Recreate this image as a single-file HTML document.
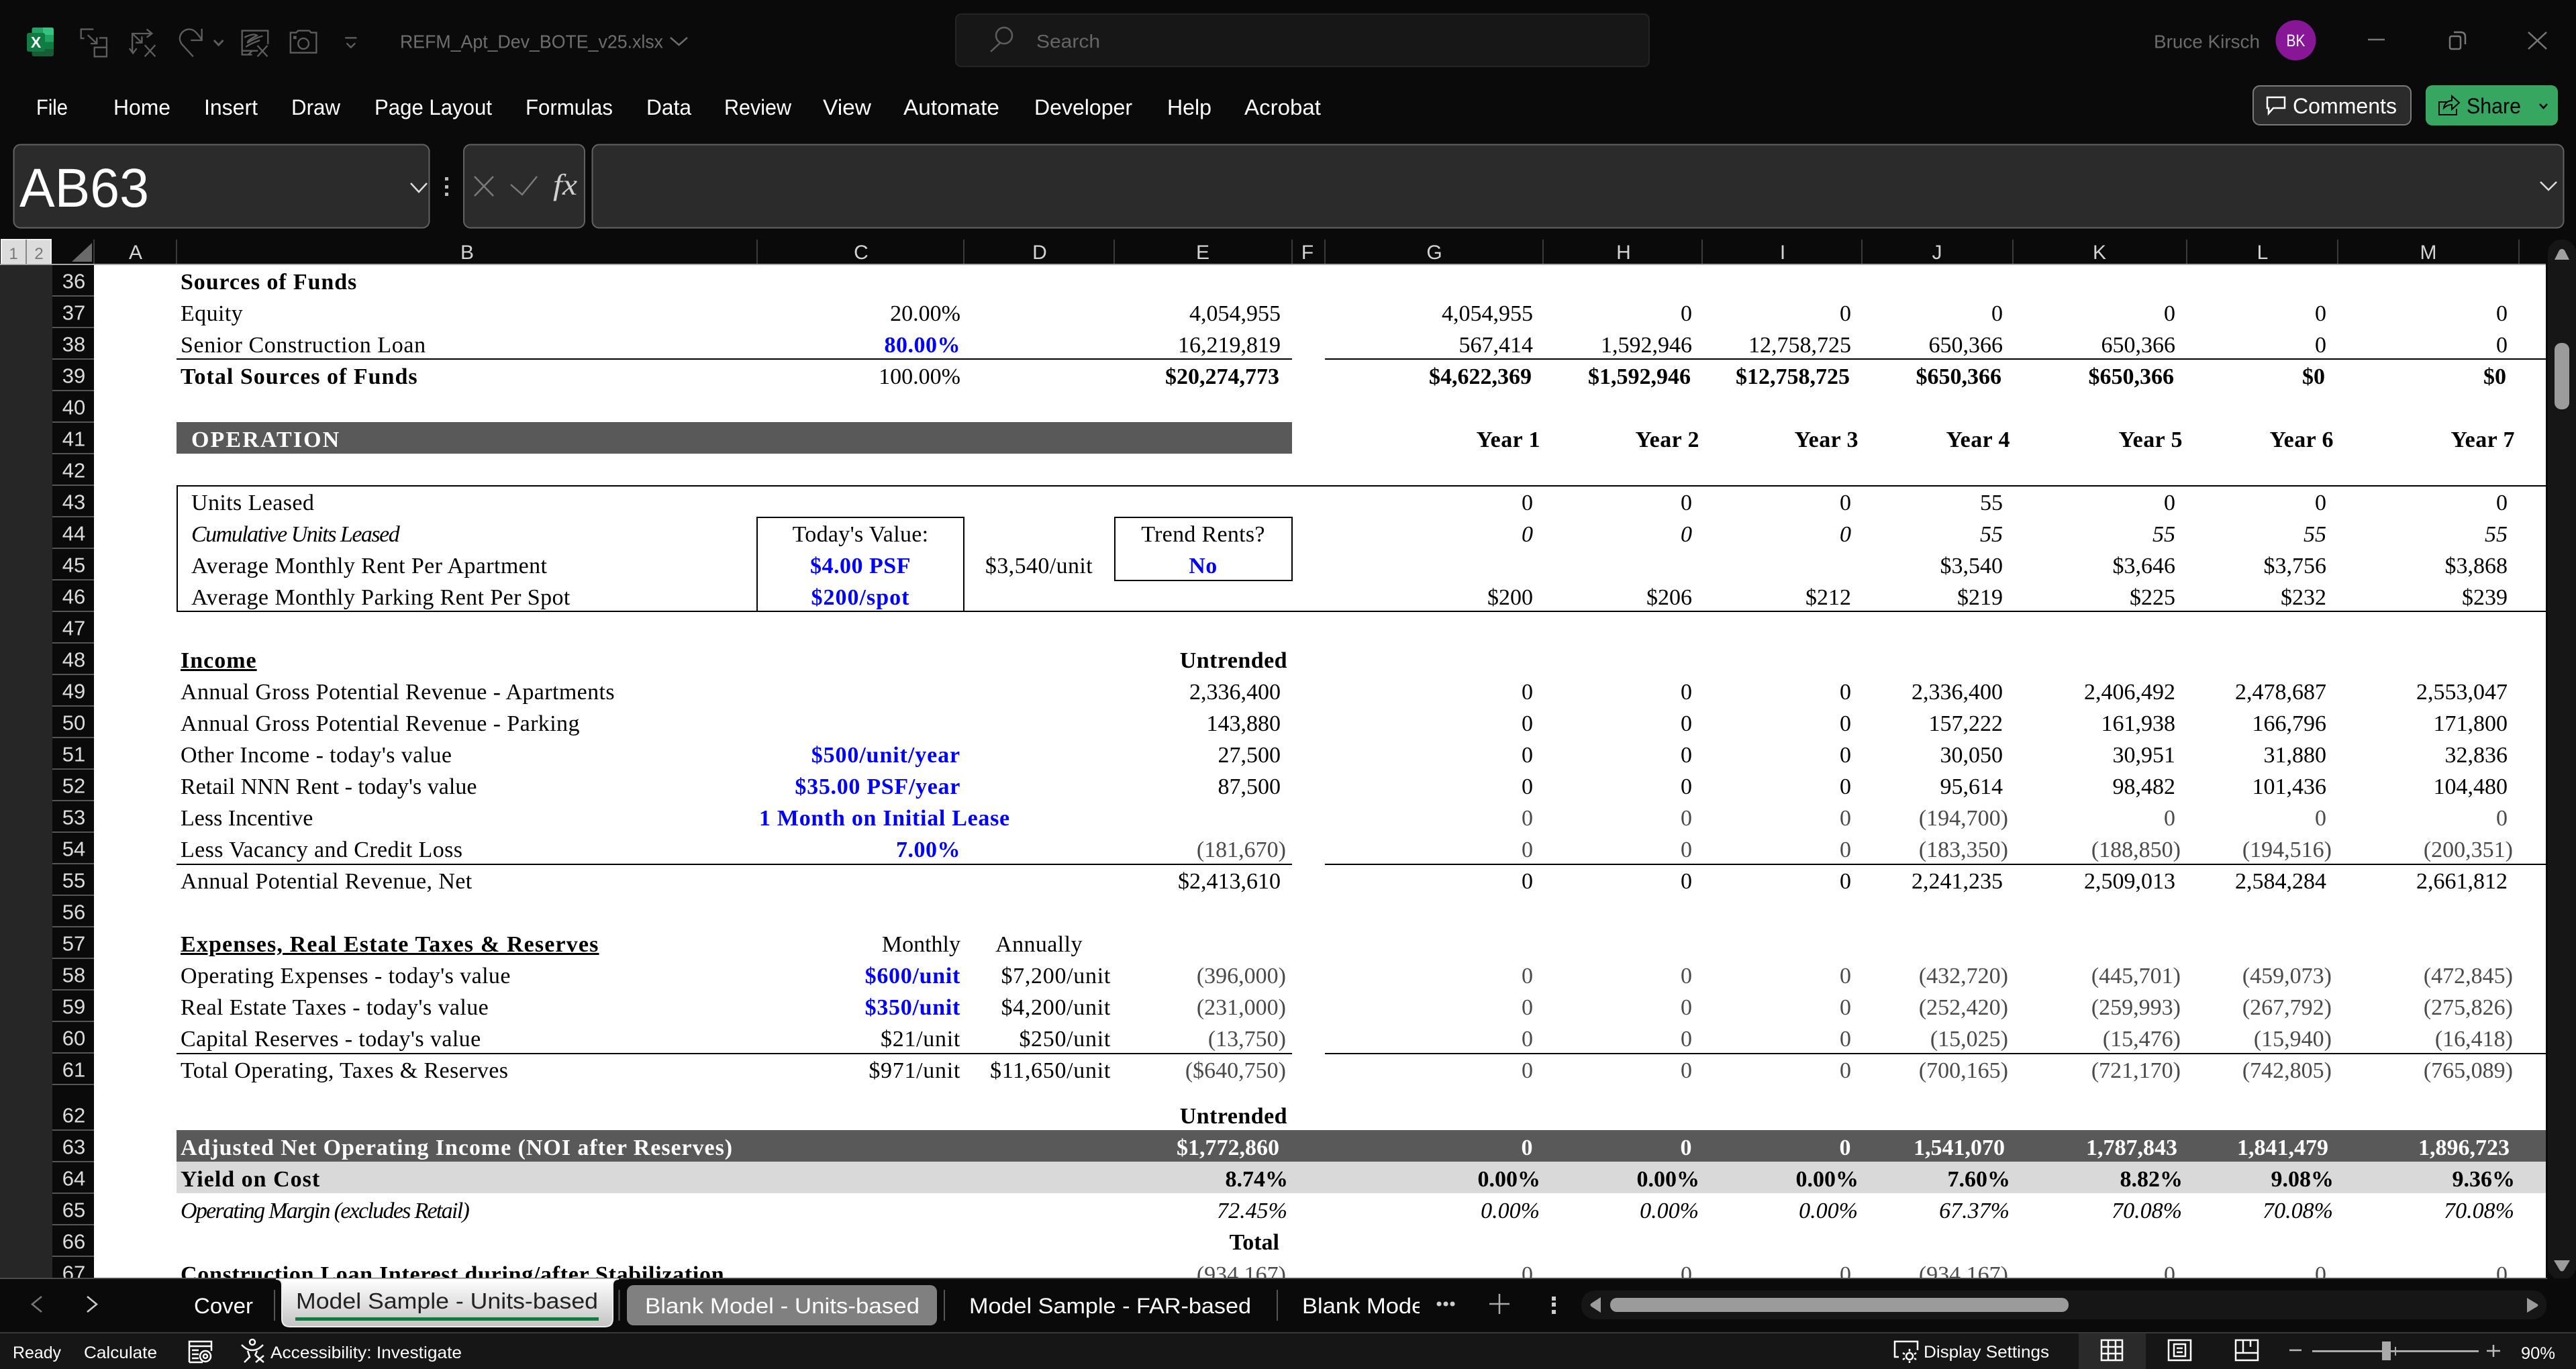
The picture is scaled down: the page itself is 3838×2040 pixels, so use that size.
<!DOCTYPE html>
<html lang="en"><head><meta charset="utf-8"><title>REFM_Apt_Dev_BOTE_v25.xlsx</title>
<style>
html,body{margin:0;padding:0;width:3838px;height:2040px;overflow:hidden;background:#0a0a0a}
#sheet{position:absolute;left:0;top:0;width:3793px;height:1905px;overflow:hidden}
#white{position:absolute;left:140px;top:394px;width:3653px;height:1511px;background:#fff}
.f{position:absolute;background:#000}
.bar{position:absolute}
.r{position:absolute;left:0;width:3838px;height:47px;margin-top:2px;font:34px/47px "Liberation Serif",serif;color:#000;white-space:nowrap}
.r span{position:absolute;top:0}
.b{left:269px;letter-spacing:.4px}.n{left:285px;letter-spacing:.4px}
.C{right:2407px}.D{right:2183px}.E{right:1930px}.G{right:1554px}.H{right:1317px}.I{right:1080px}.J{right:854px}.K{right:597px}.L{right:372px}.M{right:102px}
.cc{left:1128px;width:308px;text-align:center;letter-spacing:.3px}.cd{left:1436px;width:224px;text-align:center;letter-spacing:.4px}.ce{left:1660px;width:265px;text-align:center;letter-spacing:.3px}
.bd{font-weight:700;letter-spacing:.45px}
.bl{color:#00f;font-weight:700;letter-spacing:.5px}
.u{letter-spacing:.7px}
.g{color:#4a4a4a}
.w{color:#fff}
.it{font-style:italic;letter-spacing:0}
.p{margin-right:-8px}
.t{margin-right:2px;letter-spacing:0}
.y{margin-right:-10px}
.pc{margin-right:-11px;letter-spacing:0}
.v{margin-right:-11px}
.q{margin-right:-3px;letter-spacing:0}
</style></head><body>
<div id="sheet">
<div id="white"></div>
<div class="bar" style="left:263px;top:629px;width:1662px;height:47px;background:#595959"></div>
<div class="bar" style="left:263px;top:1684px;width:3530px;height:47px;background:#595959"></div>
<div class="bar" style="left:263px;top:1731px;width:3530px;height:47px;background:#d9d9d9"></div>
<div class="f" style="left:263px;top:534px;width:1662px;height:2px"></div>
<div class="f" style="left:1974px;top:534px;width:1819px;height:2px"></div>
<div class="f" style="left:263px;top:723px;width:3530px;height:2px"></div>
<div class="f" style="left:263px;top:910px;width:3530px;height:2px"></div>
<div class="f" style="left:263px;top:723px;width:2px;height:189px"></div>
<div class="f" style="left:1127px;top:770px;width:309px;height:2px"></div>
<div class="f" style="left:1127px;top:770px;width:2px;height:141px"></div>
<div class="f" style="left:1435px;top:770px;width:2px;height:141px"></div>
<div class="f" style="left:1660px;top:770px;width:265px;height:2px"></div>
<div class="f" style="left:1660px;top:864px;width:265px;height:2px"></div>
<div class="f" style="left:1660px;top:770px;width:2px;height:96px"></div>
<div class="f" style="left:1924px;top:770px;width:2px;height:96px"></div>
<div class="f" style="left:263px;top:1287px;width:1662px;height:2px"></div>
<div class="f" style="left:1974px;top:1287px;width:1819px;height:2px"></div>
<div class="f" style="left:263px;top:1569px;width:1662px;height:2px"></div>
<div class="f" style="left:1974px;top:1569px;width:1819px;height:2px"></div>

<div class="r" style="top:395.4px"><span class="b bd" style="letter-spacing:.9px">Sources of Funds</span></div>
<div class="r" style="top:442.4px"><span class="b">Equity</span><span class="C">20.00%</span><span class="E">4,054,955</span><span class="G">4,054,955</span><span class="H">0</span><span class="I">0</span><span class="J">0</span><span class="K">0</span><span class="L">0</span><span class="M">0</span></div>
<div class="r" style="top:489.4px"><span class="b" style="letter-spacing:.6px">Senior Construction Loan</span><span class="C bl">80.00%</span><span class="E">16,219,819</span><span class="G">567,414</span><span class="H">1,592,946</span><span class="I">12,758,725</span><span class="J">650,366</span><span class="K">650,366</span><span class="L">0</span><span class="M">0</span></div>
<div class="r" style="top:536.4px"><span class="b bd" style="letter-spacing:1px">Total Sources of Funds</span><span class="C">100.00%</span><span class="E bd t">$20,274,773</span><span class="G bd t">$4,622,369</span><span class="H bd t">$1,592,946</span><span class="I bd t">$12,758,725</span><span class="J bd t">$650,366</span><span class="K bd t">$650,366</span><span class="L bd t">$0</span><span class="M bd t">$0</span></div>
<div class="r" style="top:630.4px"><span class="n bd w" style="letter-spacing:2.100px">OPERATION</span><span class="G bd v">Year 1</span><span class="H bd v">Year 2</span><span class="I bd v">Year 3</span><span class="J bd v">Year 4</span><span class="K bd v">Year 5</span><span class="L bd v">Year 6</span><span class="M bd v">Year 7</span></div>
<div class="r" style="top:724.4px"><span class="n">Units Leased</span><span class="G">0</span><span class="H">0</span><span class="I">0</span><span class="J">55</span><span class="K">0</span><span class="L">0</span><span class="M">0</span></div>
<div class="r" style="top:771.4px"><span class="n it" style="letter-spacing:-1.5px">Cumulative Units Leased</span><span class="cc">Today's Value:</span><span class="ce">Trend Rents?</span><span class="G it">0</span><span class="H it">0</span><span class="I it">0</span><span class="J it">55</span><span class="K it">55</span><span class="L it">55</span><span class="M it">55</span></div>
<div class="r" style="top:818.4px"><span class="n">Average Monthly Rent Per Apartment</span><span class="cc bl">$4.00 PSF</span><span class="cd">$3,540/unit</span><span class="ce bl">No</span><span class="J">$3,540</span><span class="K">$3,646</span><span class="L">$3,756</span><span class="M">$3,868</span></div>
<div class="r" style="top:865.4px"><span class="n">Average Monthly Parking Rent Per Spot</span><span class="cc bl" style="letter-spacing:1px">$200/spot</span><span class="G">$200</span><span class="H">$206</span><span class="I">$212</span><span class="J">$219</span><span class="K">$225</span><span class="L">$232</span><span class="M">$239</span></div>
<div class="r" style="top:959.4px"><span class="b bd" style="letter-spacing:1px"><u>Income</u></span><span class="E bd y">Untrended</span></div>
<div class="r" style="top:1006.4px"><span class="b">Annual Gross Potential Revenue - Apartments</span><span class="E">2,336,400</span><span class="G">0</span><span class="H">0</span><span class="I">0</span><span class="J">2,336,400</span><span class="K">2,406,492</span><span class="L">2,478,687</span><span class="M">2,553,047</span></div>
<div class="r" style="top:1053.4px"><span class="b">Annual Gross Potential Revenue - Parking</span><span class="E">143,880</span><span class="G">0</span><span class="H">0</span><span class="I">0</span><span class="J">157,222</span><span class="K">161,938</span><span class="L">166,796</span><span class="M">171,800</span></div>
<div class="r" style="top:1100.4px"><span class="b">Other Income - today's value</span><span class="C bl" style="letter-spacing:.9px">$500/unit/year</span><span class="E">27,500</span><span class="G">0</span><span class="H">0</span><span class="I">0</span><span class="J">30,050</span><span class="K">30,951</span><span class="L">31,880</span><span class="M">32,836</span></div>
<div class="r" style="top:1147.4px"><span class="b" style="letter-spacing:0">Retail NNN Rent - today's value</span><span class="C bl" style="letter-spacing:.7px">$35.00 PSF/year</span><span class="E">87,500</span><span class="G">0</span><span class="H">0</span><span class="I">0</span><span class="J">95,614</span><span class="K">98,482</span><span class="L">101,436</span><span class="M">104,480</span></div>
<div class="r" style="top:1194.4px"><span class="b" style="letter-spacing:0">Less Incentive</span><span class="bl" style="left:1131px;letter-spacing:.7px">1 Month on Initial Lease</span><span class="G g">0</span><span class="H g">0</span><span class="I g">0</span><span class="J g p">(194,700)</span><span class="K g">0</span><span class="L g">0</span><span class="M g">0</span></div>
<div class="r" style="top:1241.4px"><span class="b">Less Vacancy and Credit Loss</span><span class="C bl">7.00%</span><span class="E g p">(181,670)</span><span class="G g">0</span><span class="H g">0</span><span class="I g">0</span><span class="J g p">(183,350)</span><span class="K g p">(188,850)</span><span class="L g p">(194,516)</span><span class="M g p">(200,351)</span></div>
<div class="r" style="top:1288.4px"><span class="b">Annual Potential Revenue, Net</span><span class="E">$2,413,610</span><span class="G">0</span><span class="H">0</span><span class="I">0</span><span class="J">2,241,235</span><span class="K">2,509,013</span><span class="L">2,584,284</span><span class="M">2,661,812</span></div>
<div class="r" style="top:1382.4px"><span class="b bd" style="letter-spacing:1.150px"><u>Expenses, Real Estate Taxes &amp; Reserves</u></span><span class="C">Monthly</span><span class="cd">Annually</span></div>
<div class="r" style="top:1429.4px"><span class="b">Operating Expenses - today's value</span><span class="C bl u">$600/unit</span><span class="D u">$7,200/unit</span><span class="E g p">(396,000)</span><span class="G g">0</span><span class="H g">0</span><span class="I g">0</span><span class="J g p">(432,720)</span><span class="K g p">(445,701)</span><span class="L g p">(459,073)</span><span class="M g p">(472,845)</span></div>
<div class="r" style="top:1476.4px"><span class="b">Real Estate Taxes - today's value</span><span class="C bl u">$350/unit</span><span class="D u">$4,200/unit</span><span class="E g p">(231,000)</span><span class="G g">0</span><span class="H g">0</span><span class="I g">0</span><span class="J g p">(252,420)</span><span class="K g p">(259,993)</span><span class="L g p">(267,792)</span><span class="M g p">(275,826)</span></div>
<div class="r" style="top:1523.4px"><span class="b">Capital Reserves - today's value</span><span class="C u">$21/unit</span><span class="D u">$250/unit</span><span class="E g p">(13,750)</span><span class="G g">0</span><span class="H g">0</span><span class="I g">0</span><span class="J g p">(15,025)</span><span class="K g p">(15,476)</span><span class="L g p">(15,940)</span><span class="M g p">(16,418)</span></div>
<div class="r" style="top:1570.4px"><span class="b">Total Operating, Taxes &amp; Reserves</span><span class="C u">$971/unit</span><span class="D u">$11,650/unit</span><span class="E g p">($640,750)</span><span class="G g">0</span><span class="H g">0</span><span class="I g">0</span><span class="J g p">(700,165)</span><span class="K g p">(721,170)</span><span class="L g p">(742,805)</span><span class="M g p">(765,089)</span></div>
<div class="r" style="top:1638.4px"><span class="E bd y">Untrended</span></div>
<div class="r w" style="top:1685.4px"><span class="b bd" style="letter-spacing:.95px">Adjusted Net Operating Income (NOI after Reserves)</span><span class="E bd t">$1,772,860</span><span class="G bd">0</span><span class="H bd">0</span><span class="I bd">0</span><span class="J bd q">1,541,070</span><span class="K bd q">1,787,843</span><span class="L bd q">1,841,479</span><span class="M bd q">1,896,723</span></div>
<div class="r" style="top:1732.4px"><span class="b bd" style="letter-spacing:1px">Yield on Cost</span><span class="E bd pc">8.74%</span><span class="G bd pc">0.00%</span><span class="H bd pc">0.00%</span><span class="I bd pc">0.00%</span><span class="J bd pc">7.60%</span><span class="K bd pc">8.82%</span><span class="L bd pc">9.08%</span><span class="M bd pc">9.36%</span></div>
<div class="r" style="top:1779.4px"><span class="b it" style="letter-spacing:-1.7px">Operating Margin (excludes Retail)</span><span class="E it y">72.45%</span><span class="G it y">0.00%</span><span class="H it y">0.00%</span><span class="I it y">0.00%</span><span class="J it y">67.37%</span><span class="K it y">70.08%</span><span class="L it y">70.08%</span><span class="M it y">70.08%</span></div>
<div class="r" style="top:1826.4px"><span class="E bd t">Total</span></div>
<div class="r" style="top:1873.7px"><span class="b bd" style="letter-spacing:.7px">Construction Loan Interest during/after Stabilization</span><span class="E g p">(934,167)</span><span class="G g">0</span><span class="H g">0</span><span class="I g">0</span><span class="J g p">(934,167)</span><span class="K g">0</span><span class="L g">0</span><span class="M g">0</span></div>
</div>

<svg xmlns="http://www.w3.org/2000/svg" width="3838" height="2040" viewBox="0 0 3838 2040" style="position:absolute;left:0;top:0" font-family="'Liberation Sans',sans-serif">
<defs><linearGradient id="tg" x1="0" y1="0" x2="0" y2="1"><stop offset="0" stop-color="#fff"/><stop offset="1" stop-color="#c4c4c4"/></linearGradient></defs>
<!-- chrome bg -->
<path d="M0 0H3838V357H0Z" fill="#0a0a0a"/>
<!-- Excel icon -->
<rect x="47.5" y="41" width="32.5" height="43" rx="3" fill="#185c37"/>
<path d="M50 41H64V52H47.5V44Q47.5 41 50 41Z" fill="#21a366"/><path d="M64 41H77Q80 41 80 44V52H64Z" fill="#33c481"/>
<path d="M47.5 52H80V62.5H47.5Z" fill="#21a366"/><path d="M47.5 62.5H80V73H47.5Z" fill="#107c41"/>
<rect x="40" y="49" width="27" height="28" rx="3" fill="#107c41"/>
<text x="53.5" y="71" font-size="23" font-weight="700" fill="#fff" text-anchor="middle">X</text>
<!-- QAT icons -->
<g transform="translate(0 20) scale(.3571)" stroke="#5e5e5e" stroke-width="6.5" fill="none">
<path d="M390 66H338V104H352M366 90L404 126M404 100V126H378M414 102H445V180H394V142H445"/>
<path d="M552 165V84H632M612 66L634 84L612 100M540 146L555 166L570 146M556 88L592 122M592 96V122H566M604 180L648 132M604 132L648 180"/>
<path d="M806 180L760 130C736 100 760 66 790 66C808 66 820 78 842 110M842 64V112H796"/>
<path d="M893 112L912 132L931 112" stroke-width="8"/>
<path d="M1052 172H1010V72H1118V128M1074 180L1116 134M1074 134L1116 180M1020 100C1040 90 1060 84 1072 92C1060 100 1030 112 1034 122C1050 112 1075 100 1096 94M1026 140C1040 128 1060 122 1084 112M1012 156H1076M1036 172L1052 156"/>
<path d="M1212 80H1236L1244 72H1290L1298 80H1320V164H1212Z"/><circle cx="1266" cy="126" r="22"/><rect x="1224" y="94" width="13" height="13" fill="#5e5e5e" stroke="none"/>
<path d="M1440 102H1488M1446 124L1464 142L1482 124"/>
</g>
<text x="596" y="71.5" font-size="28" fill="#6e6e6e" textLength="392" lengthAdjust="spacingAndGlyphs">REFM_Apt_Dev_BOTE_v25.xlsx</text>
<path d="M999 56L1011.5 67L1024 56" fill="none" stroke="#6e6e6e" stroke-width="2.5"/>
<rect x="1424" y="21" width="1033" height="78" rx="8" fill="#171717" stroke="#242424" stroke-width="2"/>
<circle cx="1496" cy="53" r="12" fill="none" stroke="#5e5e5e" stroke-width="2.5"/><path d="M1490 64L1476 77" stroke="#5e5e5e" stroke-width="2.5"/>
<text x="1544" y="71" font-size="28" fill="#666" textLength="95" lengthAdjust="spacingAndGlyphs">Search</text>
<text x="3209" y="71.5" font-size="28" fill="#6b6b6b" textLength="158" lengthAdjust="spacingAndGlyphs">Bruce Kirsch</text>
<circle cx="3420.5" cy="60" r="30" fill="#881798"/>
<text x="3420.5" y="69" font-size="25" fill="#fff" text-anchor="middle" textLength="28" lengthAdjust="spacingAndGlyphs">BK</text>
<path d="M3528 59H3553" stroke="#777" stroke-width="2.5"/>
<path d="M3653 54H3663Q3666 54 3666 57V70Q3666 73 3663 73H3653Q3650 73 3650 70V57Q3650 54 3653 54ZM3656 48H3666Q3673 48 3673 55V66" fill="none" stroke="#777" stroke-width="2.5"/>
<path d="M3767 48L3794 73M3794 48L3767 73" stroke="#777" stroke-width="2.5"/>
<!-- ribbon tabs -->
<g font-size="32" fill="#fff">
<text x="54" y="171" textLength="47" lengthAdjust="spacingAndGlyphs">File</text>
<text x="169" y="171" textLength="85" lengthAdjust="spacingAndGlyphs">Home</text>
<text x="304" y="171" textLength="80" lengthAdjust="spacingAndGlyphs">Insert</text>
<text x="434" y="171" textLength="73" lengthAdjust="spacingAndGlyphs">Draw</text>
<text x="558" y="171" textLength="175" lengthAdjust="spacingAndGlyphs">Page Layout</text>
<text x="783" y="171" textLength="130" lengthAdjust="spacingAndGlyphs">Formulas</text>
<text x="963" y="171" textLength="67" lengthAdjust="spacingAndGlyphs">Data</text>
<text x="1079" y="171" textLength="100" lengthAdjust="spacingAndGlyphs">Review</text>
<text x="1226" y="171" textLength="72" lengthAdjust="spacingAndGlyphs">View</text>
<text x="1346" y="171" textLength="143" lengthAdjust="spacingAndGlyphs">Automate</text>
<text x="1541" y="171" textLength="146" lengthAdjust="spacingAndGlyphs">Developer</text>
<text x="1739" y="171" textLength="66" lengthAdjust="spacingAndGlyphs">Help</text>
<text x="1854" y="171" textLength="114" lengthAdjust="spacingAndGlyphs">Acrobat</text>
</g>
<!-- Comments / Share -->
<rect x="3357" y="128" width="235" height="58" rx="10" fill="#2b2b2b" stroke="#7a7a7a" stroke-width="2"/>
<path d="M3378 145H3404V161H3387L3380 169V161H3378Z" fill="none" stroke="#fff" stroke-width="2.5"/>
<text x="3416" y="169" font-size="32" fill="#fff" textLength="155" lengthAdjust="spacingAndGlyphs">Comments</text>
<rect x="3614" y="127" width="197" height="60" rx="10" fill="#37a660"/>
<path d="M3647 152H3634V171H3660V162M3641 161C3642 153 3648 150 3653 150V143L3664 153L3653 163V156C3648 156 3644 158 3641 161Z" fill="none" stroke="#000" stroke-width="2"/>
<text x="3675" y="169" font-size="32" fill="#000" textLength="81" lengthAdjust="spacingAndGlyphs">Share</text>
<path d="M3784 155L3789.5 161L3795 155" fill="none" stroke="#000" stroke-width="2.5"/>
<!-- formula bar -->
<g fill="#2b2b2b" stroke="#626262" stroke-width="2">
<rect x="20.5" y="215.5" width="619" height="124" rx="10"/>
<rect x="691" y="215.5" width="180" height="124" rx="10"/>
<rect x="882.5" y="215.5" width="2937" height="124" rx="10"/>
</g>
<text x="29" y="308" font-size="82" fill="#fff" textLength="193" lengthAdjust="spacingAndGlyphs">AB63</text>
<path d="M612 273L624 286L636 273" fill="none" stroke="#ddd" stroke-width="2.5"/>
<path d="M663 264h5v5h-5zM663 276h5v5h-5zM663 287h5v5h-5z" fill="#bbb"/>
<path d="M707 263L735 292M735 263L707 292M761 275L778 290L800 263" fill="none" stroke="#7a7a7a" stroke-width="2.5"/>
<text x="824" y="290" font-size="44" font-style="italic" font-family="'Liberation Serif',serif" fill="#d0d0d0" textLength="36" lengthAdjust="spacingAndGlyphs">fx</text>
<path d="M3785 271L3797 283L3809 271" fill="none" stroke="#ddd" stroke-width="2.5"/>
<!-- column headers -->
<rect x="0" y="357" width="3793" height="37" fill="#0a0a0a"/>
<rect x="2" y="357" width="74" height="36" fill="#dcdcdc" stroke="#f0f0f0" stroke-width="2"/>
<path d="M39 357V393" stroke="#888" stroke-width="2"/>
<text x="20" y="386" font-size="24" fill="#777" text-anchor="middle">1</text><text x="58" y="386" font-size="24" fill="#777" text-anchor="middle">2</text>
<path d="M107 390L137 362V390Z" fill="#6a6a6a"/>
<path d="M140 357V394M263 357V394M1128 357V394M1436 357V394M1660 357V394M1925 357V394M1974 357V394M2299 357V394M2536 357V394M2774 357V394M2999 357V394M3258 357V394M3483 357V394M3753 357V394" stroke="#3a3a3a" stroke-width="2"/>
<rect x="0" y="393" width="3793" height="2" fill="#a8a8a8"/>
<g font-size="30" fill="#d4d4d4" text-anchor="middle">
<text x="202" y="386">A</text><text x="696" y="386">B</text><text x="1283" y="386">C</text><text x="1549" y="386">D</text><text x="1792" y="386">E</text><text x="1948" y="386">F</text><text x="2137" y="386">G</text><text x="2419" y="386">H</text><text x="2656" y="386">I</text><text x="2886" y="386">J</text><text x="3128" y="386">K</text><text x="3371" y="386">L</text><text x="3618" y="386">M</text>
</g>
<!-- row headers -->
<rect x="0" y="395" width="78" height="1510" fill="#262626"/>
<rect x="78" y="395" width="62" height="1510" fill="#0a0a0a"/>
<path d="M78 441H140M78 488H140M78 535H140M78 582H140M78 629H140M78 676H140M78 723H140M78 770H140M78 817H140M78 864H140M78 911H140M78 958H140M78 1005H140M78 1052H140M78 1099H140M78 1146H140M78 1193H140M78 1240H140M78 1287H140M78 1334H140M78 1381H140M78 1428H140M78 1475H140M78 1522H140M78 1569H140M78 1616H140M78 1684H140M78 1731H140M78 1778H140M78 1825H140M78 1872H140" stroke="#555" stroke-width="2"/>
<g font-size="31" fill="#dcdcdc" text-anchor="middle" transform="translate(0 -1.5)">
<text x="110" y="431">36</text><text x="110" y="478">37</text><text x="110" y="525">38</text><text x="110" y="572">39</text><text x="110" y="619">40</text><text x="110" y="666">41</text><text x="110" y="713">42</text><text x="110" y="760">43</text><text x="110" y="807">44</text><text x="110" y="854">45</text><text x="110" y="901">46</text><text x="110" y="948">47</text><text x="110" y="995">48</text><text x="110" y="1042">49</text><text x="110" y="1089">50</text><text x="110" y="1136">51</text><text x="110" y="1183">52</text><text x="110" y="1230">53</text><text x="110" y="1277">54</text><text x="110" y="1324">55</text><text x="110" y="1371">56</text><text x="110" y="1418">57</text><text x="110" y="1465">58</text><text x="110" y="1512">59</text><text x="110" y="1559">60</text><text x="110" y="1606">61</text><text x="110" y="1674">62</text><text x="110" y="1721">63</text><text x="110" y="1768">64</text><text x="110" y="1815">65</text><text x="110" y="1862">66</text><text x="110" y="1909">67</text>
</g>
<!-- vertical scrollbar -->
<rect x="3793" y="357" width="45" height="1548" fill="#0a0a0a"/>
<rect x="3796" y="357" width="42" height="1550" rx="20" fill="#161616"/>
<path d="M3813 373Q3817 369 3821 373L3828 387H3806Z" fill="#a0a0a0"/>
<rect x="3806" y="511" width="22" height="99" rx="10" fill="#9b9b9b"/>
<path d="M3805 1878H3829L3820 1893Q3817 1896 3814 1893Z" fill="#9b9b9b"/>
<!-- tab bar -->
<rect x="0" y="1905" width="3838" height="80" fill="#0a0a0a"/>
<rect x="0" y="1904" width="3795" height="2" fill="#4a4a4a"/>
<path d="M62 1932L48 1943.5L62 1955" fill="none" stroke="#777" stroke-width="2.5"/>
<path d="M130 1932L144 1943.5L130 1955" fill="none" stroke="#ccc" stroke-width="2.5"/>
<text x="289" y="1957" font-size="32" fill="#fff" textLength="88" lengthAdjust="spacingAndGlyphs">Cover</text>
<path d="M409 1922V1968M922.5 1922V1968M1407 1922V1968M1903 1922V1968" stroke="#555" stroke-width="2"/>
<path d="M411 1906Q420 1906 420 1915V1965Q420 1977 432 1977H901Q913 1977 913 1965V1915Q913 1906 922 1906Z" fill="url(#tg)" stroke="#eee" stroke-width="2"/>
<text x="441" y="1950" font-size="33" fill="#222" textLength="450" lengthAdjust="spacingAndGlyphs">Model Sample - Units-based</text>
<rect x="440" y="1963" width="452" height="5" fill="#107c41"/>
<rect x="934" y="1915" width="462" height="60" rx="10" fill="#808080"/>
<text x="961" y="1957" font-size="32" fill="#fff" textLength="409" lengthAdjust="spacingAndGlyphs">Blank Model - Units-based</text>
<text x="1444" y="1957" font-size="32" fill="#fff" textLength="420" lengthAdjust="spacingAndGlyphs">Model Sample - FAR-based</text>
<svg x="1935" y="1915" width="180" height="60"><text x="5" y="42" font-size="32" fill="#fff" textLength="190" lengthAdjust="spacingAndGlyphs">Blank Model</text></svg>
<path d="M2144 1943h.1M2154 1943h.1M2164 1943h.1" stroke="#ccc" stroke-width="7" stroke-linecap="round"/>
<path d="M2219 1943H2249M2234 1928V1958" stroke="#aaa" stroke-width="2.5"/>
<path d="M2312 1932h6v6h-6zM2312 1941h6v6h-6zM2312 1952h6v6h-6z" fill="#ccc"/>
<rect x="2356" y="1923" width="1438" height="43" rx="20" fill="#161616"/>
<path d="M2385 1933V1956L2371 1947Q2368 1944.5 2371 1942Z" fill="#9b9b9b"/>
<rect x="2399" y="1934" width="683" height="21" rx="10" fill="#9b9b9b"/>
<path d="M3765 1934V1956L3780 1947Q3783 1945 3780 1943Z" fill="#9b9b9b"/>
<!-- status bar -->
<rect x="0" y="1985" width="3838" height="2" fill="#383838"/>
<rect x="0" y="1987" width="3838" height="53" fill="#161616"/>
<g font-size="25" fill="#fff">
<text x="19" y="2024" textLength="72" lengthAdjust="spacingAndGlyphs">Ready</text>
<text x="125" y="2024" textLength="109" lengthAdjust="spacingAndGlyphs">Calculate</text>
<text x="403" y="2024" textLength="285" lengthAdjust="spacingAndGlyphs">Accessibility: Investigate</text>
<text x="2866" y="2023" textLength="187" lengthAdjust="spacingAndGlyphs">Display Settings</text>
<text x="3756" y="2025" textLength="51" lengthAdjust="spacingAndGlyphs">90%</text>
</g>
<g fill="none" stroke="#fff" stroke-width="2.5">
<path d="M282 2030V1999H315V2013M282 2006H315M286 2012H296M286 2018H296M286 2024H296M282 2030H302"/><circle cx="306" cy="2021" r="8"/><circle cx="306" cy="2021" r="3"/>
<circle cx="376" cy="2000" r="4"/><path d="M360 2004C366 2010 370 2012 376 2012C382 2012 386 2010 392 2004M369 2013L372 2022L364 2030M383 2013L380 2020M381 2020L393 2030M393 2020L381 2030"/>
<path d="M2829 2022H2823V1999H2857V2012"/><circle cx="2845" cy="2021" r="5"/><path d="M2845 2010V2014M2845 2028V2031M2835 2016L2838 2018M2852 2024L2855 2026M2835 2026L2838 2024M2852 2018L2855 2016"/>
</g>
<rect x="3097" y="1987" width="100" height="53" fill="#2a2a2a"/>
<g fill="none" stroke="#fff" stroke-width="2.5">
<path d="M3131 1997H3162V2027H3131ZM3131 2007H3162M3131 2017H3162M3141 1997V2027M3152 1997V2027"/>
<path d="M3231 1997H3264V2027H3231ZM3239 2003H3256V2021H3239ZM3243 2009H3252M3243 2015H3252"/>
<path d="M3331 1997H3364V2027H3331ZM3331 2016H3364M3342 1997V2016M3353 1997V2007"/>
</g>
<path d="M3411 2012H3429" stroke="#bbb" stroke-width="2.5"/>
<rect x="3445" y="2012" width="248" height="3" fill="#aaa"/>
<rect x="3549" y="1999" width="13" height="28" fill="#aaa"/>
<path d="M3569 2007V2020" stroke="#aaa" stroke-width="2"/>
<path d="M3705 2013H3725M3715 2004V2022" stroke="#bbb" stroke-width="2.5"/>
</svg>
</body></html>
